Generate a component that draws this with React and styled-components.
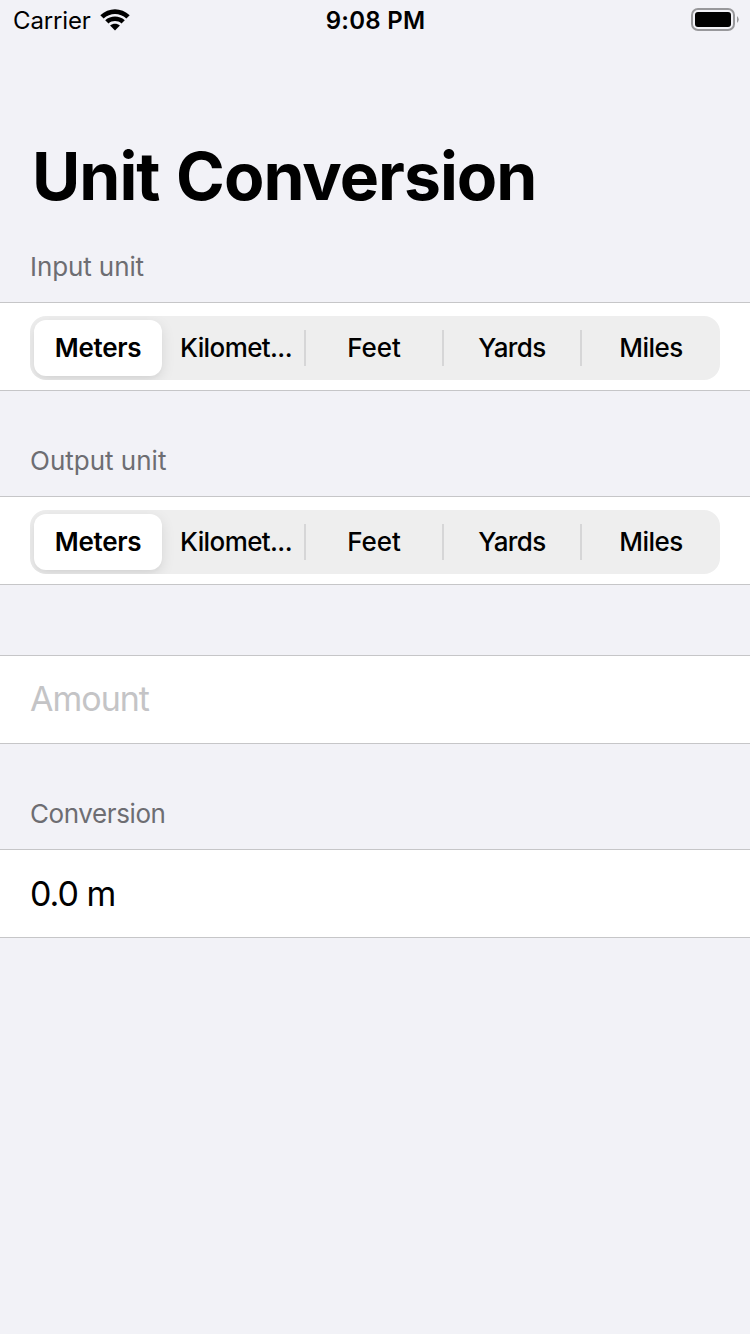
import React from 'react';
import styled, { createGlobalStyle } from 'styled-components';

const GlobalStyle = createGlobalStyle`
  * { box-sizing: border-box; }
  body { margin: 0; background: #f2f2f7; font-family: Inter, 'Liberation Sans', sans-serif; color: #000; }
`;

const Screen = styled.main`
  width: 750px;
  height: 1334px;
  background: #f2f2f7;
  overflow: hidden;
`;

const StatusBar = styled.header`
  display: grid;
  grid-template-columns: 1fr auto 1fr;
  align-items: center;
  height: 40px;
  padding: 0 11px 0 13px;
`;

const Carrier = styled.div`
  display: flex;
  align-items: center;
  gap: 9px;
  font-size: 24px;
  letter-spacing: -0.15px;
`;

const Time = styled.div`
  padding-right: 1px;
  font-size: 24px;
  font-weight: 600;
  letter-spacing: 0.25px;
`;

const Battery = styled.svg`
  justify-self: end;
`;

const Title = styled.h1`
  margin: 0;
  height: 198px;
  padding: 95px 0 0 32px;
  font-size: 66px;
  line-height: 82px;
  font-weight: 700;
  letter-spacing: -1px;
  word-spacing: 2px;
`;

const SectionHeader = styled.h2`
  display: flex;
  align-items: flex-end;
  margin: 0;
  height: ${({ $height }) => $height}px;
  padding: 0 30px 19px;
  font-size: 26px;
  line-height: 32px;
  font-weight: 400;
  letter-spacing: ${({ $tracking = 0 }) => $tracking}px;
  color: #6d6d72;
`;

const Cell = styled.div`
  display: flex;
  align-items: center;
  height: 89px;
  padding: 0 30px ${({ $placeholder }) => ($placeholder ? 3 : 0)}px;
  background: #fff;
  border: solid #c6c6c8;
  border-width: 1px 0;
  font-size: 34px;
  letter-spacing: -1px;
  color: ${({ $placeholder }) => ($placeholder ? '#c4c4c6' : '#000')};
`;

const Segments = styled.div`
  display: grid;
  grid-template-columns: repeat(5, 138px);
  width: 690px;
  height: 64px;
  margin-top: 3px;
  border-radius: 16px;
  overflow: hidden;
  background: #eeeeee;
`;

const Segment = styled.div`
  display: flex;
  align-items: center;
  justify-content: center;
  height: ${({ $selected }) => ($selected ? 56 : 36)}px;
  width: ${({ $selected }) => ($selected ? 128 : 138)}px;
  margin: ${({ $selected }) => ($selected ? '4px' : '14px 0')};
  border-radius: ${({ $selected }) => ($selected ? 12 : 0)}px;
  border-right: ${({ $divider }) => ($divider ? '2px solid #d6d6d7' : '0')};
  background: ${({ $selected }) => ($selected ? '#fff' : 'transparent')};
  box-shadow: ${({ $selected }) => ($selected ? '0 4px 14px rgba(0,0,0,.1), 0 3px 2px rgba(0,0,0,.02)' : 'none')};
  font-size: 26px;
  line-height: 30px;
  font-weight: ${({ $selected }) => ($selected ? 600 : 450)};
  letter-spacing: ${({ $tracking }) => $tracking}px;
`;

const units = [
  { name: 'Meters', tracking: -0.3 },
  { name: 'Kilomet...', tracking: -0.6 },
  { name: 'Feet', tracking: -0.1 },
  { name: 'Yards', tracking: -0.6 },
  { name: 'Miles', tracking: -0.5 },
];

function UnitPicker() {
  return (
    <Cell>
      <Segments>
        {units.map(({ name, tracking }, i) => (
          <Segment key={name} $selected={i === 0} $divider={i > 0 && i < 4} $tracking={tracking}>
            {name}
          </Segment>
        ))}
      </Segments>
    </Cell>
  );
}

export default function App() {
  return (
    <>
      <GlobalStyle />
      <Screen>
        <StatusBar>
          <Carrier>
            <span>Carrier</span>
            <svg width="30" height="22" viewBox="0 0 30 22">
              <path d="M0.3 6.2C8.6 -1.9 21.4 -1.9 29.7 6.2L26.4 9.4C20 3.4 10 3.4 3.6 9.4Z" />
              <path d="M5.2 11.2C10.8 6.2 19.2 6.2 24.8 11.2L21.5 14.4C17.8 11.3 12.2 11.3 8.5 14.4Z" />
              <path d="M10.1 16.4C13 14.2 17 14.2 19.9 16.4L15 21.6Z" />
            </svg>
          </Carrier>
          <Time>9:08 PM</Time>
          <Battery width="48" height="24" viewBox="0 0 48 24">
            <rect x="1" y="1" width="42" height="21" rx="6" fill="none" stroke="#98989b" strokeWidth="2" />
            <rect x="4" y="4" width="36" height="15" rx="3" />
            <path d="M46 8 Q49.5 11.5 46 15Z" fill="#98989b" />
          </Battery>
        </StatusBar>
        <Title>Unit Conversion</Title>
        <SectionHeader $height={64} $tracking={-0.1}>Input unit</SectionHeader>
        <UnitPicker />
        <SectionHeader $height={105}>Output unit</SectionHeader>
        <UnitPicker />
        <SectionHeader $height={70} />
        <Cell $placeholder>Amount</Cell>
        <SectionHeader $height={105} $tracking={-0.4}>Conversion</SectionHeader>
        <Cell>0.0 m</Cell>
      </Screen>
    </>
  );
}
